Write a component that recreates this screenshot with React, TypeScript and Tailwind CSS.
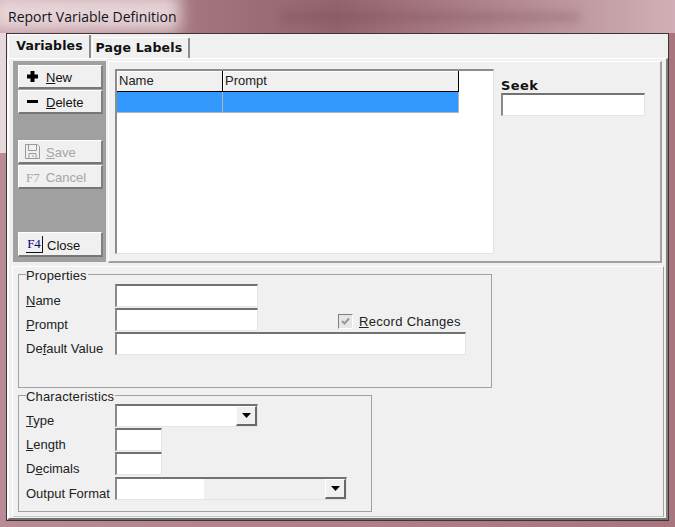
import { ReactNode } from 'react'

const raised = 'border border-t-white border-l-white border-r-[#808080] border-b-[#767676] border-b-2 border-r-2'

function SideButton({ children, disabled, className = 'h-[24px]' }: { children: ReactNode; disabled?: boolean; className?: string }) {
  return (
    <div className={`flex w-[85px] items-center bg-[#f0f0f0] pl-[7px] text-[13px] ${raised} ${disabled ? 'text-[#a5a5a5]' : 'text-[#111]'} ${className}`}>
      {children}
    </div>
  )
}

function Field({ w, h = 'h-[23px]', children }: { w: string; h?: string; children?: ReactNode }) {
  return (
    <div className={`relative border-2 border-r border-b border-t-[#727272] border-l-[#8a8a8a] border-r-[#e4e4e4] border-b-[#e4e4e4] bg-white ${w} ${h}`}>
      {children}
    </div>
  )
}

function Arrow({ className = '' }: { className?: string }) {
  return (
    <div className={`flex h-[20px] w-[21px] items-center justify-center border border-r-2 border-b-2 border-t-white border-l-white border-r-[#696969] border-b-[#696969] bg-[#f0f0f0] ${className}`}>
      <svg width="9" height="5" viewBox="0 0 9 5"><path d="M0 0h9L4.5 5z" fill="#000" /></svg>
    </div>
  )
}

function Row({ label, children, className = '' }: { label: ReactNode; children: ReactNode; className?: string }) {
  return (
    <div className={`flex h-[24px] items-start ${className}`}>
      <div className="mt-[10px] w-[89px] shrink-0 whitespace-nowrap text-[13px] leading-none text-[#222]">{label}</div>
      {children}
    </div>
  )
}

function Group({ title, className, children }: { title: string; className: string; children: ReactNode }) {
  return (
    <div className={`relative border border-[#a0a0a0] ${className}`}>
      <div className="absolute left-[7px] top-[-7px] bg-[#f0f0f0] pr-[1px] text-[13px] leading-[15px] tracking-[0.15px] text-[#222]">{title}</div>
      {children}
    </div>
  )
}

export default function App() {
  return (
    <div className="relative flex h-[527px] w-[675px] flex-col overflow-hidden bg-gradient-to-r from-[#b88b95] to-[#a8757f] font-['Liberation_Sans',sans-serif]">
      {/* aero glass behind the window */}
      <div className="absolute left-0 top-0 h-[33px] w-[675px] bg-gradient-to-r from-[#b98f98] via-[#94626d] to-[#d0b0b6]" />
      <div className="absolute left-[-10px] top-[-6px] h-[38px] w-[190px] bg-[#ecdcdf] opacity-90 blur-[8px]" />
      <div className="absolute left-[280px] top-[12px] h-[10px] w-[300px] bg-[#6f3f4b] opacity-25 blur-[5px]" />
      <div className="absolute left-0 top-[33px] h-[120px] w-[6px] bg-[#e6d8db]" />

      <div className="relative flex h-[33px] items-center pb-[1px] pl-[8px] font-['Open_Sans',sans-serif] text-[14px] text-[#10141c]">
        Report Variable Definition
      </div>

      <div className="relative ml-[6px] h-[488px] w-[663px] border border-[#3f3338] bg-[#f0f0f0]">
        {/* tabs */}
        <div className="flex h-[24px] items-end font-['DejaVu_Sans',sans-serif] text-[12.5px] font-bold tracking-[0.1px] text-[#111]">
          <div className="ml-[1px] flex h-[24px] w-[83px] items-center justify-center border-l border-t border-white pb-[1px] pr-[1px] shadow-[inset_-2px_0_0_#8c8c8c]">Variables</div>
          <div className="ml-[1px] flex h-[21px] w-[98px] items-center justify-center border-l border-t border-white pr-[5px] tracking-[0.2px] shadow-[inset_-2px_0_0_#8c8c8c]">Page Labels</div>
        </div>

        {/* tab page */}
        <div className="h-[462px] border-2 border-t border-t-white border-l-white border-r-[#808080] border-b-[#707070]">
          {/* variables list */}
          <div className="flex h-[207px] pl-[4px] pt-[2px]">
            <div className="flex h-[201px] w-[93px] flex-col bg-[#a0a0a0] pl-[5px] pt-[4px]">
              <SideButton>
                <svg width="13" height="13" viewBox="0 0 13 13" className="mr-[7px]"><path d="M4.5 1h4v3.5H12v4H8.500V12h-4V8.500H1v-4h3.500z" fill="#000" /></svg>
                <span className="mt-[2px]"><u>N</u>ew</span>
              </SideButton>
              <SideButton className="mt-[1px] h-[24px]">
                <svg width="13" height="13" viewBox="0 0 13 13" className="mr-[7px]"><path d="M1 5h11v3H1z" fill="#000" /></svg>
                <span className="mt-[2px]"><u>D</u>elete</span>
              </SideButton>
              <SideButton disabled className="mt-[26px] h-[24px]">
                <svg width="15" height="15" viewBox="0 0 15 15" className="ml-[-1px] mr-[6px]" fill="none" stroke="#9a9a9a"><path d="M.5.500h12l2 2v12H.5z" /><path d="M3.500.500v6h8v-6M4 14.500v-5h7v5M8 11v2" /></svg>
                <span className="mt-[3px]"><u>S</u>ave</span>
              </SideButton>
              <SideButton disabled className="mt-[1px] h-[24px]">
                <span className="mr-[6px] mt-[2px] font-['Liberation_Serif',serif] text-[13px]">F7</span>
                <span className="mt-[3px]">Cancel</span>
              </SideButton>
              <SideButton className="mt-[43px] h-[25px]">
                <span className="mr-[4px] flex h-[17px] w-[17px] items-center justify-center border-r border-b border-[#111] font-['Liberation_Serif',serif] text-[13px] text-[#000080]">F4</span>
                <span className="mt-[3px]">Close</span>
              </SideButton>
            </div>

            <div className="ml-[2px] flex h-[202px] w-[554px] border-2 border-t border-l border-t-white border-l-white border-r-[#a0a0a0] border-b-[#a0a0a0] pl-[6px] pt-[7px]">
              <div className="h-[185px] w-[379px] border-2 border-r border-b border-t-[#8c8c8c] border-l-[#8c8c8c] border-r-[#e4e4e4] border-b-[#e4e4e4] bg-white">
                <div className="flex h-[21px] w-[342px] border-b border-r border-black text-[13px] text-[#222]">
                  <div className="w-[106px] border-r border-black bg-[#f0f0f0] pl-[2px] leading-[20px] shadow-[inset_1px_1px_0_#fff]">Name</div>
                  <div className="flex-1 bg-[#f0f0f0] pl-[2px] leading-[20px] shadow-[inset_1px_1px_0_#fff]">Prompt</div>
                </div>
                <div className="flex h-[21px] w-[342px] border-b border-r border-[#b4b4b4] bg-[#3399ff]">
                  <div className="w-[106px] border-r border-[#b4b4b4]" />
                </div>
              </div>
              <div className="ml-[7px] pt-[9px]">
                <div className="font-['DejaVu_Sans',sans-serif] text-[13px] font-bold leading-[15px] tracking-[0.4px] text-[#111]">Seek</div>
                <Field w="w-[144px]" />
              </div>
            </div>
          </div>

          {/* properties and characteristics */}
          <div className="ml-[3px] h-[251px] w-[652px] border border-t-white border-l-white border-r-[#a0a0a0] border-b-[#c8c8c8] pl-[5px] pt-[7px]">
            <Group title="Properties" className="h-[114px] w-[474px] pl-[7px] pt-[9px]">
              <Row label={<><u>N</u>ame</>}><Field w="w-[143px]" /></Row>
              <Row label={<><u>P</u>rompt</>}>
                <Field w="w-[143px]" />
                <div className="ml-[80px] mt-[4px] flex items-center text-[13px] tracking-[0.3px] text-[#222]">
                  <div className="flex h-[15px] w-[15px] items-center justify-center border border-t-[#808080] border-l-[#808080] border-r-white border-b-white bg-[#e6e6e6]">
                    <svg width="11" height="11" viewBox="0 0 11 11" fill="none" stroke="#9a9a9a" strokeWidth="2"><path d="M2 5l2.500 2.500L9 2.500" /></svg>
                  </div>
                  <span className="ml-[6px] whitespace-nowrap"><u>R</u>ecord Changes</span>
                </div>
              </Row>
              <Row label={<>De<u>f</u>ault Value</>}><Field w="w-[351px]" /></Row>
            </Group>

            <Group title="Characteristics" className="mt-[7px] h-[117px] w-[354px] pl-[7px] pt-[8px]">
              <Row label={<><u>T</u>ype</>}>
                <Field w="w-[143px]">
                  <Arrow className="absolute right-0 top-0" />
                </Field>
              </Row>
              <Row label={<><u>L</u>ength</>}><Field w="w-[47px]" /></Row>
              <Row label={<>D<u>e</u>cimals</>}><Field w="w-[47px]" /></Row>
              <Row label="Output Format" className="mt-[1px]">
                <Field w="w-[232px]">
                  <div className="absolute bottom-0 right-0 top-0 w-[142px] bg-[#f0f0f0]" />
                  <Arrow className="absolute right-0 top-0" />
                </Field>
              </Row>
            </Group>
          </div>
        </div>
      </div>
    </div>
  )
}
